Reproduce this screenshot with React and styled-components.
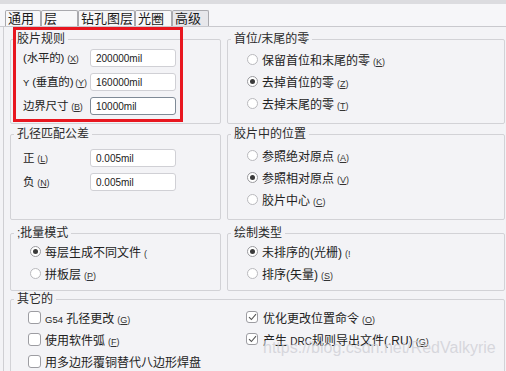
import React from "react";
import styled, { createGlobalStyle } from "styled-components";

const Global = createGlobalStyle`
    html, body {
        margin: 0;
        padding: 0;
        background: #f4f4f7;
    }
    body {
        font-family: "Liberation Sans", "Noto Sans CJK SC", sans-serif;
        color: #1e1e1e;
    }
`

const Window = styled.div`
    position: relative;
    width: 506px;
    height: 371px;
    overflow: hidden;
    background: #f3f3f6;
`

const TopStrip = styled.div`
    height: 4px;
    background: #dcdce0;
`

const TabBar = styled.div`
    display: flex;
    align-items: flex-end;
    height: 22px;
    padding-left: 5px;
    background: #f6f6f9;
    border-bottom: 1px solid #c9c9ce;
`

const Tab = styled.div`
    box-sizing: border-box;
    width: ${props => props.$w}px;
    height: 16px;
    padding-left: 2px;
    border: 1px solid #a9a9ae;
    border-bottom: none;
    border-radius: 2px 2px 0 0;
    background: ${props => props.$dim ? "#e7e7eb" : "#f7f7f9"};
    font-size: 13px;
    line-height: 15px;
    color: #1a1a1a;
    white-space: nowrap;
`

const Panel = styled.div`
    display: flex;
    flex-direction: column;
    margin-left: 3px;
    padding: 5px 0 0 6px;
    border-left: 1px solid #cfcfd3;
    height: 350px;
    box-sizing: border-box;
`

const Row = styled.div`
    display: grid;
    grid-template-columns: 211px 278px;
    column-gap: 6px;
    margin-top: ${props => props.$mt || 0}px;
`

const Group = styled.fieldset`
    box-sizing: border-box;
    min-width: 0;
    height: ${props => props.$h}px;
    margin: 0;
    padding: 0;
    border: 1px solid #d2d2d6;
    border-radius: 2px;
    grid-column: ${props => props.$wide ? "1 / 3" : "auto"};
`

const Legend = styled.legend`
    margin-left: 3px;
    padding: 0 3px;
    font-size: 12px;
    line-height: 14px;
    color: #2a2a2a;
`

const Body = styled.div`
    padding: ${props => props.$pt || 0}px 0 0 ${props => props.$pl || 0}px;
`

const FieldRow = styled.div`
    display: grid;
    grid-template-columns: 67px 86px;
    align-items: center;
    height: 24px;
`

const Label = styled.span`
    font-size: 11.5px;
    line-height: 14px;
    letter-spacing: -0.2px;
    white-space: nowrap;
    color: #222;
`

const Small = styled.span`
    font-size: ${props => props.$size || 10}px;
`

const Mn = styled.span`
    font-size: 9px;
    margin-left: ${props => props.$ml ?? 3}px;
    color: #333;
`

const Input = styled.input`
    box-sizing: border-box;
    width: 86px;
    height: 18px;
    margin: 0;
    padding: 0 5px;
    border: 1px solid ${props => props.$focus ? "#7f8a96" : "#d0d0d5"};
    border-radius: 3px;
    background: #fff;
    font-family: "Liberation Sans", Arial, sans-serif;
    font-size: 10px;
    color: #1a1a1a;
    outline: none;
`

const Option = styled.div`
    display: flex;
    align-items: center;
    gap: ${props => props.$gap || 4}px;
    height: 22px;
    font-size: 12px;
    white-space: nowrap;
    color: #222;
`

const Radio = styled.span`
    box-sizing: border-box;
    display: flex;
    align-items: center;
    justify-content: center;
    width: 11px;
    height: 11px;
    border: 1px solid ${props => props.$on ? "#9a9a9e" : "#b9b9bd"};
    border-radius: 50%;
    background: #fff;
    &::after {
        content: "";
        display: ${props => props.$on ? "block" : "none"};
        width: 5px;
        height: 5px;
        border-radius: 50%;
        background: #3a3a3a;
    }
`

const Box = styled.span`
    box-sizing: border-box;
    display: flex;
    align-items: center;
    justify-content: center;
    width: ${props => props.$s || 13}px;
    height: ${props => props.$s || 13}px;
    border: 1px solid #9d9da2;
    border-radius: 3px;
    background: #fff;
`

const CheckGrid = styled.div`
    display: grid;
    grid-template-columns: 218px 1fr;
    grid-auto-rows: 22px;
    padding-left: 17px;
`

const Highlight = styled.div`
    position: absolute;
    left: 13px;
    top: 27px;
    width: 170px;
    height: 95px;
    box-sizing: border-box;
    border: 3px solid #e8161f;
    pointer-events: none;
`

const Watermark = styled.div`
    position: absolute;
    left: 263px;
    top: 339px;
    font-family: "Liberation Sans", Arial, sans-serif;
    font-size: 16px;
    color: rgba(205, 205, 212, 0.75);
    white-space: nowrap;
    pointer-events: none;
`

const Check = () => (
    <svg width="9" height="8" viewBox="0 0 9 8">
        <path d="M1 4.2 L3.4 6.5 L8 1.2" fill="none" stroke="#555" strokeWidth="1.1" />
    </svg>
)

const M = ({ k, ml }) => <Mn $ml={ml}>(<u>{k}</u>)</Mn>

const RadioOpt = ({ on, children }) => (
    <Option>
        <Radio $on={on} />
        <span>{children}</span>
    </Option>
)

const CheckOpt = ({ on, s, children }) => (
    <Option $gap={on ? 5 : 4}>
        <Box $s={s}>{on && <Check />}</Box>
        <span>{children}</span>
    </Option>
)

const tabs = [
    { name: "通用", w: 36 },
    { name: "层", w: 37 },
    { name: "钻孔图层", w: 57 },
    { name: "光圈", w: 37 },
    { name: "高级", w: 37, dim: true },
];

const App = () => {
    return (
        <Window>
            <Global />
            <TopStrip />
            <TabBar>
                {tabs.map(t => (
                    <Tab key={t.name} $w={t.w} $dim={t.dim}>{t.name}</Tab>
                ))}
            </TabBar>
            <Panel>
                <Row>
                    <Group $h={92}>
                        <Legend>胶片规则</Legend>
                        <Body $pl={12}>
                            <FieldRow>
                                <Label>(水平的)<M k="X" /></Label>
                                <Input defaultValue="200000mil" readOnly />
                            </FieldRow>
                            <FieldRow>
                                <Label><Small $size={9.5}>Y</Small> (垂直的)<M k="Y" ml={2} /></Label>
                                <Input defaultValue="160000mil" readOnly />
                            </FieldRow>
                            <FieldRow>
                                <Label>边界尺寸<M k="B" /></Label>
                                <Input defaultValue="10000mil" readOnly $focus />
                            </FieldRow>
                        </Body>
                    </Group>
                    <Group $h={92}>
                        <Legend>首位/末尾的零</Legend>
                        <Body $pl={19} $pt={2}>
                            <RadioOpt>保留首位和末尾的零<M k="K" /></RadioOpt>
                            <RadioOpt on>去掉首位的零<M k="Z" /></RadioOpt>
                            <RadioOpt>去掉末尾的零<M k="T" /></RadioOpt>
                        </Body>
                    </Group>
                </Row>
                <Row $mt={3}>
                    <Group $h={93}>
                        <Legend>孔径匹配公差</Legend>
                        <Body $pl={12} $pt={5}>
                            <FieldRow>
                                <Label>正<M k="L" /></Label>
                                <Input defaultValue="0.005mil" readOnly />
                            </FieldRow>
                            <FieldRow>
                                <Label>负<M k="N" /></Label>
                                <Input defaultValue="0.005mil" readOnly />
                            </FieldRow>
                        </Body>
                    </Group>
                    <Group $h={93}>
                        <Legend>胶片中的位置</Legend>
                        <Body $pl={19} $pt={3}>
                            <RadioOpt>参照绝对原点<M k="A" /></RadioOpt>
                            <RadioOpt on>参照相对原点<M k="V" /></RadioOpt>
                            <RadioOpt>胶片中心<M k="C" /></RadioOpt>
                        </Body>
                    </Group>
                </Row>
                <Row $mt={6}>
                    <Group $h={65}>
                        <Legend>;批量模式</Legend>
                        <Body $pl={19}>
                            <RadioOpt on>每层生成不同文件<Mn>(</Mn></RadioOpt>
                            <RadioOpt>拼板层<M k="P" /></RadioOpt>
                        </Body>
                    </Group>
                    <Group $h={65}>
                        <Legend>绘制类型</Legend>
                        <Body $pl={19}>
                            <RadioOpt on>未排序的(光栅)<Mn>(!</Mn></RadioOpt>
                            <RadioOpt>排序(矢量)<M k="S" /></RadioOpt>
                        </Body>
                    </Group>
                </Row>
                <Row $mt={1}>
                    <Group $h={90} $wide>
                        <Legend>其它的</Legend>
                        <CheckGrid>
                            <CheckOpt><Small $size={9.5}>G54</Small> 孔径更改<M k="G" /></CheckOpt>
                            <CheckOpt on s={12}>优化更改位置命令<M k="O" /></CheckOpt>
                            <CheckOpt>使用软件弧<M k="F" /></CheckOpt>
                            <CheckOpt on s={12}>产生 <Small>DRC</Small>规则导出文件(.RU)<M k="G" /></CheckOpt>
                            <CheckOpt>用多边形覆铜替代八边形焊盘</CheckOpt>
                        </CheckGrid>
                    </Group>
                </Row>
            </Panel>
            <Highlight />
            <Watermark>https://blog.csdn.net/RedValkyrie</Watermark>
        </Window>
    );
}

export default App;
